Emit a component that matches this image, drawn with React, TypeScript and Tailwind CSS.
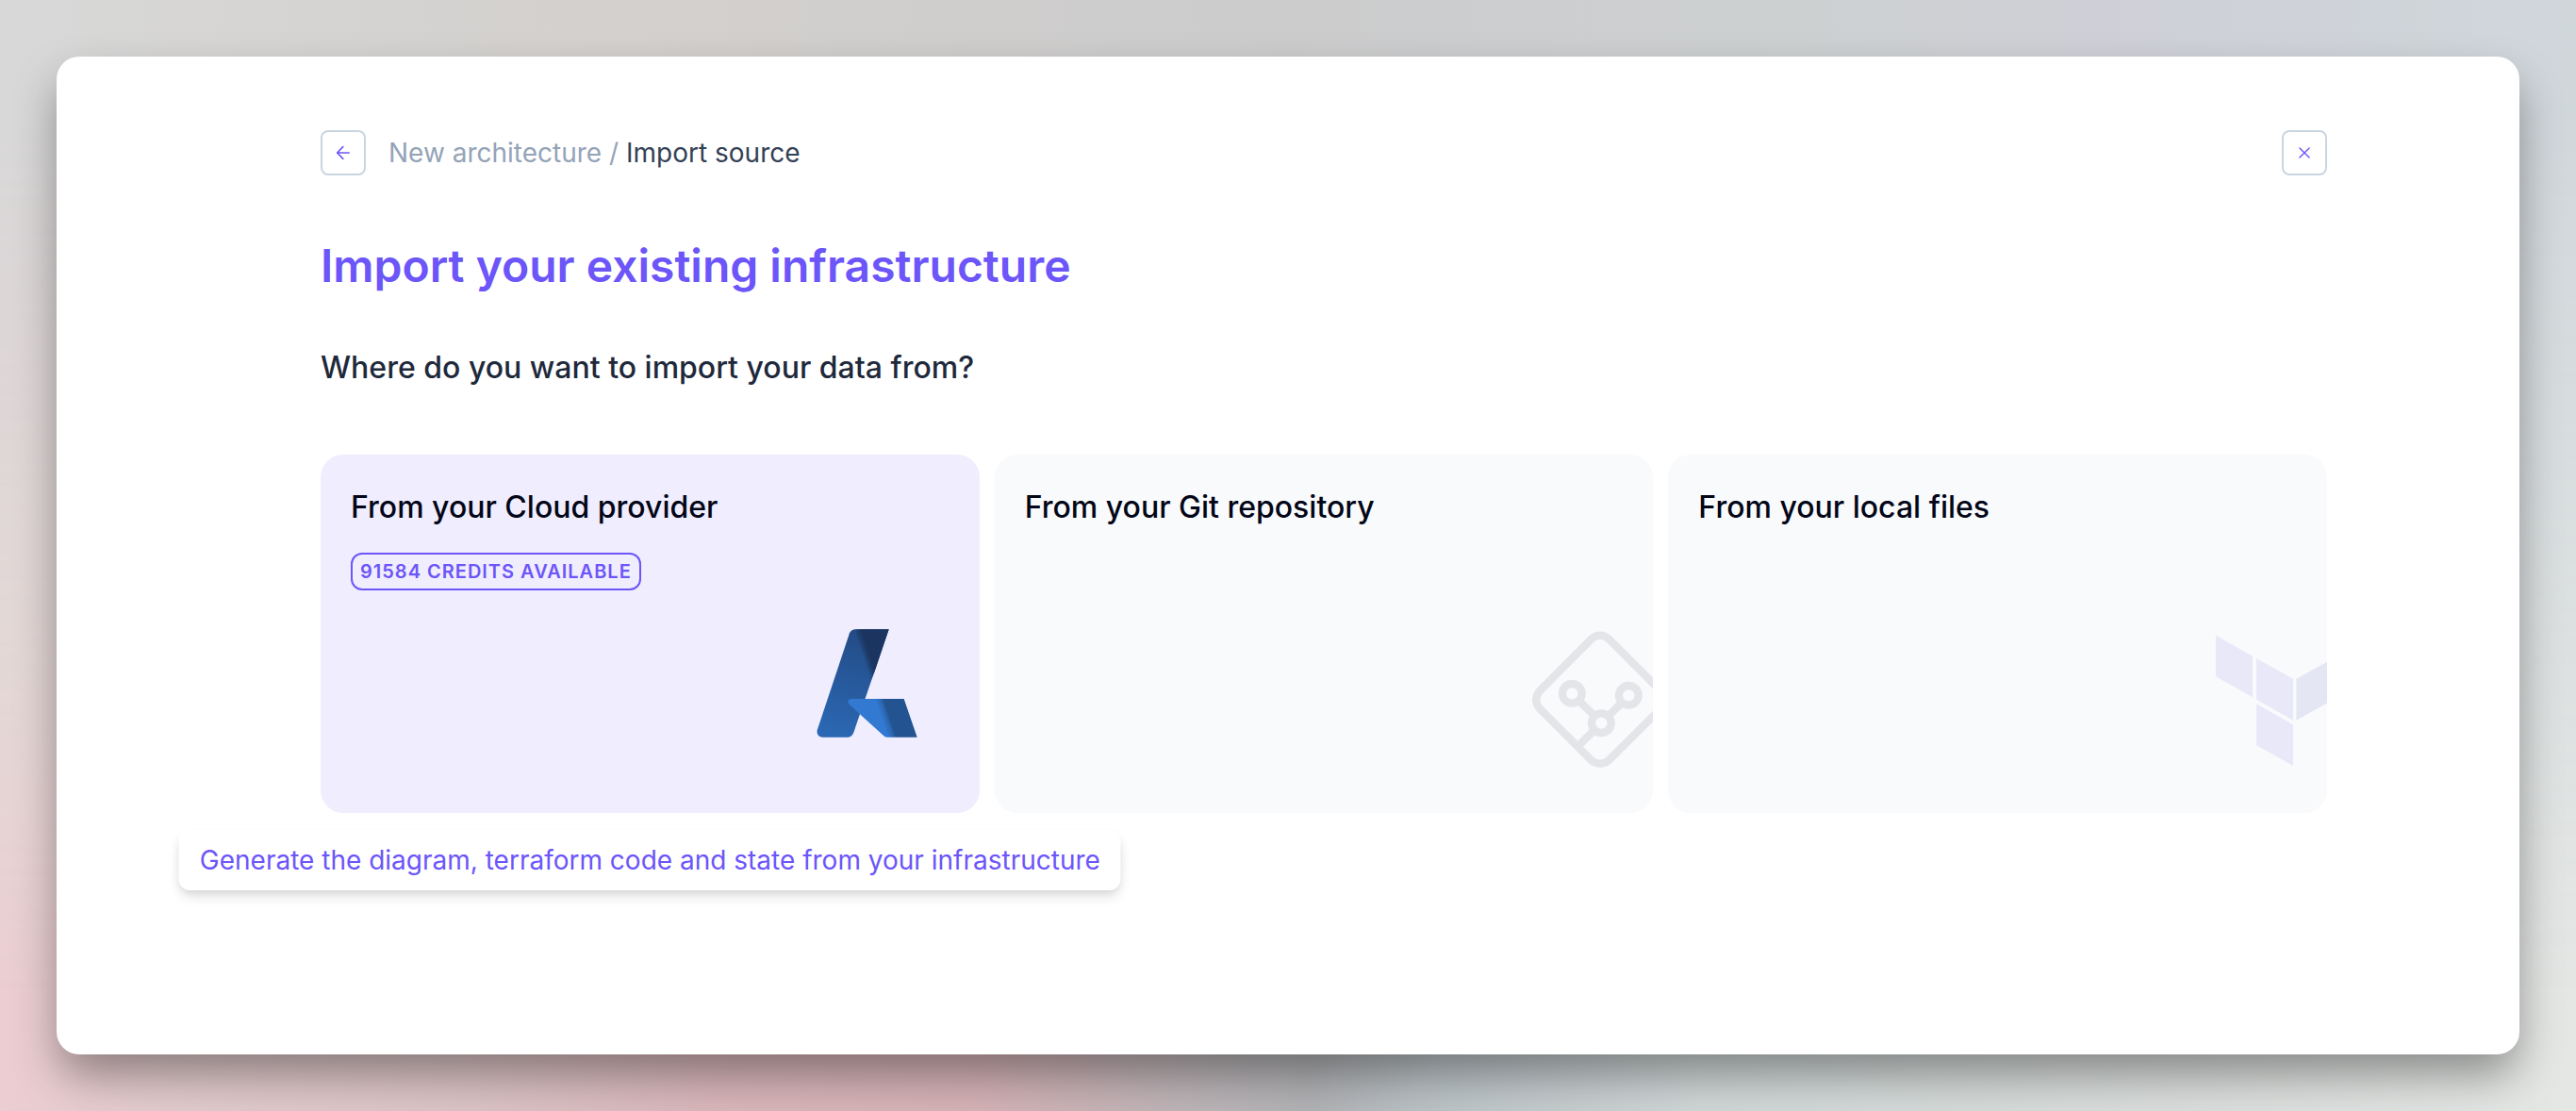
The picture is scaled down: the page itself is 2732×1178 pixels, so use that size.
import type { ReactNode } from "react";

function ArrowLeftIcon() {
  return (
    <svg viewBox="0 0 16 16" className="size-4" fill="none" stroke="currentColor" strokeWidth="1.6" strokeLinecap="round" strokeLinejoin="round" aria-hidden="true">
      <path d="M14.2 8H1.8M7.8 1.6 1.6 8l6.2 6.4" />
    </svg>
  );
}

function CloseIcon() {
  return (
    <svg viewBox="0 0 16 16" className="size-4" fill="none" stroke="currentColor" strokeWidth="1.4" strokeLinecap="round" aria-hidden="true">
      <path d="M2.9 2.9 13.1 13.1M13.1 2.9 2.9 13.1" />
    </svg>
  );
}

function AzureLogo() {
  return (
    <svg viewBox="21 42 480 480" className="size-40" aria-hidden="true">
      <defs>
        <linearGradient id="stem" x1="230" y1="85" x2="140" y2="425" gradientUnits="userSpaceOnUse">
          <stop offset="0" stopColor="#234b85" />
          <stop offset="1" stopColor="#2b68b4" />
        </linearGradient>
        <linearGradient id="fold" x1="222" y1="160" x2="246" y2="152" gradientUnits="userSpaceOnUse">
          <stop offset="0" stopColor="#1b3560" stopOpacity="0" />
          <stop offset="0.65" stopColor="#1b3560" stopOpacity="0.8" />
          <stop offset="1" stopColor="#1b3560" />
        </linearGradient>
        <linearGradient id="foot" x1="287" y1="370" x2="311" y2="362" gradientUnits="userSpaceOnUse">
          <stop offset="0" stopColor="#3279d1" />
          <stop offset="0.65" stopColor="#2a66b0" />
          <stop offset="1" stopColor="#235390" />
        </linearGradient>
      </defs>
      <path fill="url(#stem)" d="M202 82H308L196 410Q190 425 176 425H98Q77 424 80 403L183 94Q189 82 202 82Z" />
      <path fill="url(#fold)" d="M202 82H308L262 219L230 300Z" />
      <path fill="url(#foot)" d="M186 303H356L398 425H301Q296 425 292 421L180 319Q174 307 186 303Z" />
    </svg>
  );
}

function GitLogo() {
  return (
    <svg viewBox="105 42 480 480" className="size-40" fill="none" stroke="#e4e5e9" strokeWidth="25" aria-hidden="true">
      <path d="M295 111Q321 92 347 111L516 280Q534 306 516 332L347 500Q321 518 295 500L127 332Q108 306 127 280Z" />
      <circle cx="232" cy="286" r="31" />
      <circle cx="412" cy="292" r="31" />
      <circle cx="325" cy="380" r="31" />
      <path d="M254 309 303 357M390 315 348 357M303 402 252 452" />
    </svg>
  );
}

function TerraformLogo() {
  return (
    <svg viewBox="120 42 480 480" className="size-40" aria-hidden="true">
      <path fill="#e9e8f8" d="M150 101 267 167V298L150 232ZM279 174 396 239V371L279 305ZM279 319 396 385V516L279 451Z" />
      <path fill="#e4e6f3" d="M406 239 524 174V305L406 371Z" />
    </svg>
  );
}

function IconButton({ label, children }: { label: string; children: ReactNode }) {
  return (
    <button type="button" aria-label={label} className="flex size-12 items-center justify-center rounded-lg border-2 border-[#cbd5e1] text-[#6c55f9]">
      {children}
    </button>
  );
}

type SourceCardProps = {
  title: string;
  badge?: string;
  hint?: string;
  active?: boolean;
  bleed?: boolean;
  logo: ReactNode;
};

function SourceCard({ title, badge, hint, active, bleed, logo }: SourceCardProps) {
  return (
    <div className="relative min-w-0 flex-1">
      <button
        type="button"
        className={`flex h-[380px] w-full flex-col items-start overflow-hidden rounded-3xl px-8 pt-8 pb-12 text-left ${active ? "bg-[#f0edff]" : "bg-[#f9fafc]"}`}
      >
        <span className="text-[32px] leading-[48px] font-medium text-[#020617]">{title}</span>
        {badge && (
          <span className="mt-6 flex h-10 items-center rounded-xl border-2 border-[#6c55f9] px-2 text-[20px] font-semibold tracking-[1px] text-[#6c55f9]">
            {badge}
          </span>
        )}
        <span className={`mt-auto shrink-0 self-end ${bleed ? "-mr-16" : ""} ${badge ? "-mt-16" : ""}`}>{logo}</span>
      </button>
      {hint && (
        <div role="tooltip" className="absolute top-full left-1/2 mt-[18px] -translate-x-1/2 rounded-xl bg-white px-[22px] py-3 text-[28px] leading-10 whitespace-nowrap text-[#6c55f9] shadow-[0_8px_14px_-2px_rgba(0,0,0,0.12),0_4px_8px_-2px_rgba(0,0,0,0.08)]">
          {hint}
        </div>
      )}
    </div>
  );
}

export default function App() {
  return (
    <div className="relative isolate flex min-h-screen bg-[radial-gradient(ellipse_120px_420px_at_0%_55%,#ead9d6,transparent),linear-gradient(to_right,#eccdd1_0%,#e2cbcd_7%,#dcc4c6_18%,#d9b6ba_28%,#d5b2b6_38%,#bab4b7_47%,#b1b2b5_51%,#bcc4c8_56%,#d0d7d7_66%,#dbdedc_85%,#e5e7e5_100%)] p-[60px] font-['Inter',sans-serif]">
      <div
        aria-hidden="true"
        className="absolute inset-0 -z-10 bg-[linear-gradient(to_right,#d8d8d8_0%,#d3d0cd_25%,#cccccd_50%,#cdd0d1_70%,#cfd0d7_82%,#d0d7db_100%)] [mask-image:linear-gradient(to_bottom,black_10%,transparent_90%)]"
      />
      <main className="flex-1 rounded-3xl bg-white pt-[78px] pr-[204px] pl-[280px] shadow-[0_24px_48px_-4px_rgba(0,0,0,0.4)]">
        <header className="flex items-center">
          <IconButton label="Back">
            <ArrowLeftIcon />
          </IconButton>
          <nav aria-label="Breadcrumb" className="ml-6 flex-1 text-[28px] leading-10 text-[#334155]">
            <a href="#" className="text-[#94a3b8]">New architecture</a>
            <span className="text-[#94a3b8]"> / </span>
            <span>Import source</span>
          </nav>
          <IconButton label="Close">
            <CloseIcon />
          </IconButton>
        </header>
        <h1 className="mt-[60px] text-[48px] leading-[72px] font-semibold text-[#6c55f9]">Import your existing infrastructure</h1>
        <h2 className="mt-12 text-[32px] leading-[48px] font-medium text-[#1e293b]">Where do you want to import your data from?</h2>
        <section className="mt-[68px] flex gap-4">
          <SourceCard
            active
            title="From your Cloud provider"
            badge="91584 CREDITS AVAILABLE"
            hint="Generate the diagram, terraform code and state from your infrastructure"
            logo={<AzureLogo />}
          />
          <SourceCard bleed title="From your Git repository" logo={<GitLogo />} />
          <SourceCard bleed title="From your local files" logo={<TerraformLogo />} />
        </section>
      </main>
    </div>
  );
}
